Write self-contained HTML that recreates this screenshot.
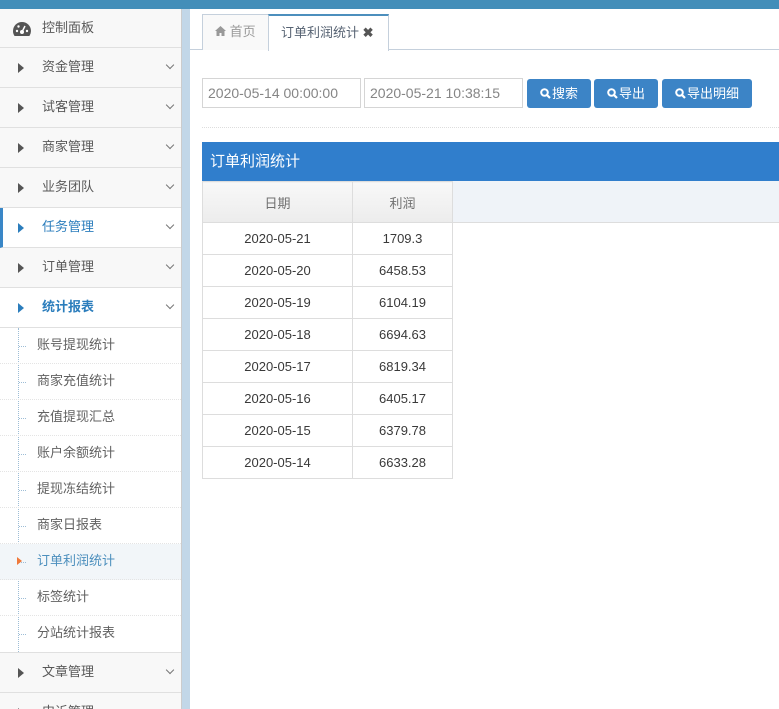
<!DOCTYPE html>
<html><head><meta charset="utf-8"><style>
*{margin:0;padding:0;box-sizing:border-box}
body{width:779px;height:709px;overflow:hidden;background:#fff;font-family:"Liberation Sans","Noto Sans CJK SC",sans-serif;font-size:13px;color:#393939;position:relative}
.top{position:absolute;left:0;top:0;width:779px;height:9px;background:#438eb9}
.side{position:absolute;left:0;top:9px;width:182px;height:700px;background:#f2f2f2;border-right:1px solid #ccc;overflow:hidden}
.strip{position:absolute;left:182px;top:9px;width:8px;height:700px;background:#c2d7e8}
.it{position:relative;height:40px;border-bottom:1px solid #e0e0e0;line-height:38px;padding-left:42px;font-size:13px;color:#585858;background:#f8f8f8}
.it .ar{position:absolute;left:18px;top:15px;width:0;height:0;border-left:6px solid #555;border-top:5px solid transparent;border-bottom:5px solid transparent}
.it .ch{position:absolute;right:8px;top:14px;width:6px;height:6px;border-right:1px solid #777;border-bottom:1px solid #777;transform:rotate(45deg)}
.it.act{color:#2b7dbc;background:#fff;font-weight:bold}
.it.act .ar{border-left-color:#2b7dbc}
.it.sel{border-left:3px solid #3a87c7;padding-left:39px;color:#2b7dbc;background:#fff}
.it.sel .ar{left:15px;border-left-color:#2b7dbc}
.sub{background:#fff;position:relative;border-bottom:1px solid #e0e0e0}
.sub:before{content:"";position:absolute;left:18px;top:0;bottom:0;border-left:1px dotted #9dbdd6}
.si{height:36px;line-height:34px;padding-left:37px;color:#616161;border-bottom:1px dotted #e4e4e4;position:relative}
.si:before{content:"";position:absolute;left:19px;top:18px;width:7px;border-top:1px dotted #9dbdd6}
.si.on{background:#f2f6f9;color:#4c8fbd}
.si.on:after{content:"";position:absolute;left:17px;top:13px;border-left:5px solid #f0793a;border-top:4px solid transparent;border-bottom:4px solid transparent}
.tabs{position:absolute;left:190px;top:9px;width:589px;height:41px;border-bottom:1px solid #c5d0dc}
.tab{position:absolute;top:5px;height:36px;line-height:34px;border:1px solid #c5d0dc;border-bottom:none;background:#f9f9f9;color:#999;padding:0 12px}
.tab.a{background:#fff;color:#576373;border-top:2px solid #4c8fbd;height:37px}
input{position:absolute;top:78px;height:30px;border:1px solid #d5d5d5;padding-left:5px;font-family:inherit;font-size:14px;color:#858585}
.btn{position:absolute;top:79px;height:29px;background:#3c84c6;color:#fff;border-radius:3px;line-height:29px;text-align:center;font-size:13px}
.btn svg{vertical-align:-1px;margin-right:1px}
table{position:absolute;left:202px;top:181px;border-collapse:collapse}
td,th{border:1px solid #ddd;text-align:center;font-size:13px;color:#393939;height:32px;font-weight:normal}
th{height:41px;background:linear-gradient(#f8f8f8,#ececec);color:#707070}
</style></head><body>
<div class="top"></div>
<div class="side">
<div class="it" style="height:39px"><svg style="position:absolute;left:12px;top:12px" width="20" height="16" viewBox="0 0 20 16"><path d="M10 1A9 9 0 0 0 1 10c0 2 .6 3.7 1.6 5h14.8A9 9 0 0 0 19 10 9 9 0 0 0 10 1z" fill="#555"/><circle cx="10" cy="11" r="2" fill="#fff"/><path d="M10 11L13 5" stroke="#fff" stroke-width="1.5"/><circle cx="5" cy="10" r="1.2" fill="#fff"/><circle cx="15" cy="10" r="1.2" fill="#fff"/><circle cx="6.5" cy="5.5" r="1.2" fill="#fff"/></svg>控制面板</div>
<div class="it"><span class="ar"></span>资金管理<span class="ch"></span></div>
<div class="it"><span class="ar"></span>试客管理<span class="ch"></span></div>
<div class="it"><span class="ar"></span>商家管理<span class="ch"></span></div>
<div class="it"><span class="ar"></span>业务团队<span class="ch"></span></div>
<div class="it sel"><span class="ar"></span>任务管理<span class="ch"></span></div>
<div class="it"><span class="ar"></span>订单管理<span class="ch"></span></div>
<div class="it act"><span class="ar"></span>统计报表<span class="ch"></span></div>
<div class="sub">
<div class="si">账号提现统计</div><div class="si">商家充值统计</div><div class="si">充值提现汇总</div><div class="si">账户余额统计</div><div class="si">提现冻结统计</div><div class="si">商家日报表</div><div class="si on">订单利润统计</div><div class="si">标签统计</div><div class="si" style="border-bottom:none">分站统计报表</div>
</div>
<div class="it"><span class="ar"></span>文章管理<span class="ch"></span></div>
<div class="it"><span class="ar"></span>申诉管理<span class="ch"></span></div>
</div>
<div class="strip"></div>
<div class="tabs">
<div class="tab" style="left:12px;width:67px"><svg width="11" height="10" viewBox="0 0 11 10"><path d="M5.5 0L0 5h1.5v5h3V7h2v3h3V5H11z" fill="#999"/></svg> 首页</div>
<div class="tab a" style="left:78px;width:121px">订单利润统计 <b style="color:#555">✖</b></div>
</div>
<input style="left:202px;width:159px" value="2020-05-14 00:00:00">
<input style="left:364px;width:159px" value="2020-05-21 10:38:15">
<div class="btn" style="left:527px;width:64px"><svg width="11" height="11" viewBox="0 0 11 11"><circle cx="4.5" cy="4.5" r="3.3" stroke="#fff" stroke-width="2" fill="none"/><path d="M7 7l3 3" stroke="#fff" stroke-width="2.2"/></svg>搜索</div>
<div class="btn" style="left:594px;width:64px"><svg width="11" height="11" viewBox="0 0 11 11"><circle cx="4.5" cy="4.5" r="3.3" stroke="#fff" stroke-width="2" fill="none"/><path d="M7 7l3 3" stroke="#fff" stroke-width="2.2"/></svg>导出</div>
<div class="btn" style="left:662px;width:90px"><svg width="11" height="11" viewBox="0 0 11 11"><circle cx="4.5" cy="4.5" r="3.3" stroke="#fff" stroke-width="2" fill="none"/><path d="M7 7l3 3" stroke="#fff" stroke-width="2.2"/></svg>导出明细</div>
<div style="position:absolute;left:202px;top:127px;width:577px;border-top:1px dotted #ddd"></div>
<div style="position:absolute;left:202px;top:142px;width:577px;height:39px;background:#307ecc;color:#fff;font-size:15px;line-height:39px;padding-left:8px">订单利润统计</div>
<div style="position:absolute;left:452px;top:181px;width:327px;height:42px;background:#eff3f8;border-bottom:1px solid #ddd"></div>
<table>
<tr><th style="width:150px">日期</th><th style="width:100px">利润</th></tr>
<tr><td>2020-05-21</td><td>1709.3</td></tr>
<tr><td>2020-05-20</td><td>6458.53</td></tr>
<tr><td>2020-05-19</td><td>6104.19</td></tr>
<tr><td>2020-05-18</td><td>6694.63</td></tr>
<tr><td>2020-05-17</td><td>6819.34</td></tr>
<tr><td>2020-05-16</td><td>6405.17</td></tr>
<tr><td>2020-05-15</td><td>6379.78</td></tr>
<tr><td>2020-05-14</td><td>6633.28</td></tr>
</table>
</body></html>
